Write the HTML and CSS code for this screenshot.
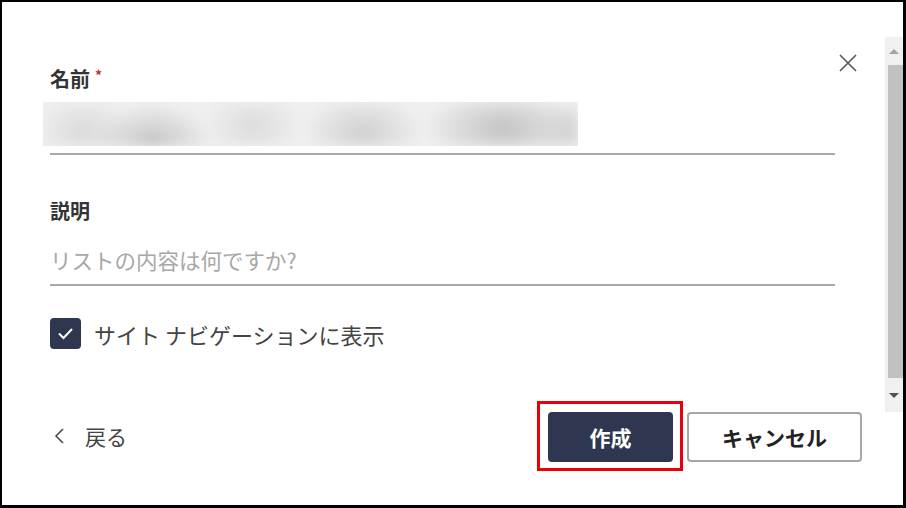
FILE: index.html
```html
<!DOCTYPE html>
<html lang="ja">
<head>
    <meta charset="UTF-8">
    <meta name="viewport" content="width=device-width, initial-scale=1.0">
    <title>リストの作成</title>
    <link rel="stylesheet" href="styles.css">
</head>
<body>
<div class="frame">
    <div class="dialog">
        <button class="close" type="button" aria-label="閉じる">
            <svg width="20" height="20" viewBox="0 0 20 20"><path d="M2 2 L18 18 M18 2 L2 18" stroke="#555" stroke-width="1.6" fill="none"/></svg>
        </button>

        <form class="form">
            <div class="field">
                <label class="field-label">名前<span class="req">*</span></label>
                <div class="field-input">
                    <div class="blur-clip"><div class="blurred"></div></div>
                </div>
            </div>

            <div class="field field-desc">
                <label class="field-label" for="desc">説明</label>
                <div class="field-input">
                    <input type="text" id="desc" placeholder="リストの内容は何ですか?">
                </div>
            </div>

            <label class="check">
                <span class="check-box">
                    <svg width="31" height="31" viewBox="0 0 31 31"><polyline points="9,15.5 13.5,20 22,11" stroke="#fff" stroke-width="2" fill="none"/></svg>
                </span>
                <span class="check-text">サイト ナビゲーションに表示</span>
            </label>
        </form>

        <div class="footer">
            <a class="back" href="#">
                <svg width="12" height="16" viewBox="0 0 12 16"><polyline points="10,1 3,8 10,15" stroke="#444" stroke-width="1.5" fill="none"/></svg>
                <span>戻る</span>
            </a>
            <div class="actions">
                <span class="highlight">
                    <button type="button" class="btn btn-primary">作成</button>
                </span>
                <button type="button" class="btn btn-cancel">キャンセル</button>
            </div>
        </div>
    </div>

    <div class="scrollbar">
        <div class="sb-up"><span class="tri-up"></span></div>
        <div class="sb-thumb"></div>
        <div class="sb-down"><span class="tri-down"></span></div>
    </div>
</div>
</body>
</html>
```

FILE: styles.css
```css
body {
    margin: 0;
    font-family: "Noto Sans CJK JP", "Noto Sans", sans-serif;
    background: #fff;
}
.frame {
    width: 906px;
    height: 508px;
    box-sizing: border-box;
    border: 2px solid #000;
    border-right-width: 3px;
    border-bottom-width: 3px;
    display: flex;
    background: #fff;
}
.dialog {
    flex: 1;
    position: relative;
    display: flex;
    flex-direction: column;
    padding: 0 23px 0 48px;
}
.close {
    position: absolute;
    top: 51px;
    right: 27px;
    padding: 0;
    border: none;
    background: none;
    width: 20px;
    height: 20px;
    cursor: pointer;
}
.form {
    padding: 64px 27px 0 0;
}
.field-label {
    display: block;
    font-size: 20px;
    line-height: 26px;
    font-weight: bold;
    color: #333;
}
.req {
    color: #b83232;
    font-size: 14px;
    vertical-align: top;
    line-height: 18px;
    margin-left: 5px;
}
.field-input {
    margin-top: 10px;
    padding-bottom: 7px;
    border-bottom: 2px solid #a8a8a8;
}
.blur-clip {
    width: 535px;
    height: 44px;
    margin-left: -7px;
    overflow: hidden;
    background: #efefef;
}
.blurred {
    height: 100%;
    background:
        radial-gradient(60px 40px at 110px 40px, #c6c6c6, rgba(238,238,238,0)),
        radial-gradient(50px 36px at 40px 30px, #dadada, rgba(238,238,238,0)),
        radial-gradient(50px 36px at 210px 24px, #dcdcdc, rgba(238,238,238,0)),
        radial-gradient(60px 38px at 320px 30px, #d0d0d0, rgba(238,238,238,0)),
        radial-gradient(80px 40px at 460px 26px, #c3c3c3, rgba(238,238,238,0)),
        radial-gradient(40px 30px at 530px 28px, #d4d4d4, rgba(238,238,238,0)),
        #efefef;
    filter: blur(5px);
}
.field-desc {
    margin-top: 43px;
}
.field-desc .field-input {
    margin-top: 21px;
    padding-bottom: 9px;
}
.field-input input {
    display: block;
    width: 100%;
    box-sizing: border-box;
    border: none;
    outline: none;
    padding: 0;
    font-family: inherit;
    font-size: 21.5px;
    line-height: 30px;
    height: 30px;
    color: #333;
}
.field-input input::placeholder {
    color: #a8a8a8;
}
.check {
    display: flex;
    align-items: center;
    gap: 13px;
    margin-top: 32px;
    cursor: pointer;
}
.check-box {
    width: 31px;
    height: 31px;
    border-radius: 4px;
    background: #2e3650;
    display: flex;
    align-items: center;
    justify-content: center;
}
.check-text {
    font-size: 22px;
    line-height: 30px;
    color: #444;
}
.footer {
    margin-top: auto;
    padding-bottom: 34px;
    display: flex;
    align-items: center;
    justify-content: space-between;
}
.back {
    display: flex;
    align-items: center;
    gap: 20px;
    margin-left: 3px;
    color: #444;
    text-decoration: none;
    font-size: 21px;
    line-height: 28px;
}
.actions {
    display: flex;
    align-items: center;
    gap: 4px;
}
.highlight {
    display: block;
    border: 3px solid #e8000b;
    padding: 8px 7px 6px 8px;
}
.btn {
    display: block;
    height: 50px;
    border-radius: 4px;
    font-family: inherit;
    font-size: 21px;
    font-weight: bold;
    cursor: pointer;
}
.btn-primary {
    width: 125px;
    background: #2e3650;
    color: #fff;
    border: none;
}
.btn-cancel {
    width: 175px;
    margin-top: 2px;
    background: #fff;
    color: #222;
    border: 2px solid #a6a6a6;
}
.scrollbar {
    width: 18px;
    height: 375px;
    margin-top: 35px;
    background: #f0f0f0;
    display: flex;
    flex-direction: column;
}
.sb-up {
    height: 28px;
    display: flex;
    align-items: center;
    justify-content: center;
}
.sb-thumb {
    flex: 1;
    margin-left: 3px;
    background: #c1c1c1;
}
.sb-down {
    height: 34px;
    display: flex;
    align-items: center;
    justify-content: center;
}
.tri-up {
    border-left: 5px solid transparent;
    border-right: 5px solid transparent;
    border-bottom: 5px solid #a3a3a3;
}
.tri-down {
    border-left: 5px solid transparent;
    border-right: 5px solid transparent;
    border-top: 5px solid #505050;
}
```
